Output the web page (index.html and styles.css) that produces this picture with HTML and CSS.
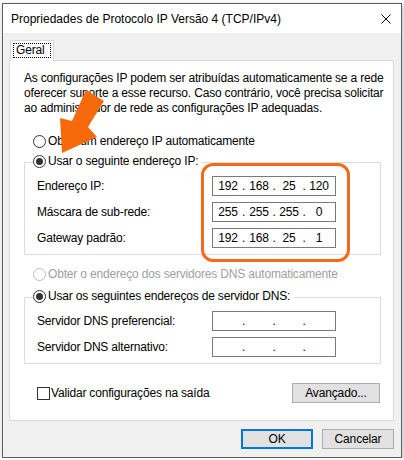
FILE: index.html
```html
<!DOCTYPE html>
<html lang="pt">
<head>
    <meta charset="UTF-8">
    <title>Propriedades de Protocolo IP Versão 4 (TCP/IPv4)</title>
    <link rel="stylesheet" href="styles.css">
</head>
<body>

    <div class="window">
        <div class="titlebar">
            <span class="title">Propriedades de Protocolo IP Versão 4 (TCP/IPv4)</span>
            <svg class="close" width="10" height="10" viewBox="0 0 10 10">
                <path d="M0.5 0.5 L9.5 9.5 M9.5 0.5 L0.5 9.5" stroke="#000" stroke-width="1"/>
            </svg>
        </div>

        <div class="content">
            <div class="tabs">
                <div class="tab"><span class="tab-focus">Geral</span></div>
            </div>

            <div class="panel">
                <p class="intro">
                    As configurações IP podem ser atribuídas automaticamente se a rede<br>
                    oferecer suporte a esse recurso. Caso contrário, você precisa solicitar<br>
                    ao administrador de rede as configurações IP adequadas.
                </p>

                <div class="option first">
                    <span class="radio"></span>
                    <span>Obter um endereço IP automaticamente</span>
                </div>

                <div class="group ip-group">
                    <div class="group-head">
                        <span class="radio checked"></span>
                        <span>Usar o seguinte endereço IP:</span>
                    </div>
                    <div class="rows">
                        <label>Endereço IP:</label>
                        <div class="ip-box">
                            <span>192</span><i>.</i><span>168</span><i>.</i><span>25</span><i>.</i><span>120</span>
                        </div>
                        <label>Máscara de sub-rede:</label>
                        <div class="ip-box">
                            <span>255</span><i>.</i><span>255</span><i>.</i><span>255</span><i>.</i><span>0</span>
                        </div>
                        <label>Gateway padrão:</label>
                        <div class="ip-box">
                            <span>192</span><i>.</i><span>168</span><i>.</i><span>25</span><i>.</i><span>1</span>
                        </div>
                    </div>
                    <div class="highlight"></div>
                </div>

                <div class="option disabled">
                    <span class="radio"></span>
                    <span>Obter o endereço dos servidores DNS automaticamente</span>
                </div>

                <div class="group dns-group">
                    <div class="group-head">
                        <span class="radio checked"></span>
                        <span>Usar os seguintes endereços de servidor DNS:</span>
                    </div>
                    <div class="rows">
                        <label>Servidor DNS preferencial:</label>
                        <div class="ip-box">
                            <span></span><i>.</i><span></span><i>.</i><span></span><i>.</i><span></span>
                        </div>
                        <label>Servidor DNS alternativo:</label>
                        <div class="ip-box">
                            <span></span><i>.</i><span></span><i>.</i><span></span><i>.</i><span></span>
                        </div>
                    </div>
                </div>

                <div class="panel-bottom">
                    <div class="check-line">
                        <span class="checkbox"></span>
                        <span>Validar configurações na saída</span>
                    </div>
                    <button class="btn advanced">Avançado...</button>
                </div>
            </div>

            <div class="footer">
                <button class="btn default">OK</button>
                <button class="btn">Cancelar</button>
            </div>
        </div>
    </div>

    <!-- seta laranja por cima do texto -->
    <svg class="arrow" width="404" height="460" viewBox="0 0 404 460">
        <polygon points="86,90 104,101 88,127 97,137 62,153 60,118 72,121" fill="#f76a0c"/>
    </svg>

</body>
</html>
```

FILE: styles.css
```css
body {
    margin: 0;
    background-color: #fff;
    font-family: 'Liberation Sans', Arial, sans-serif;
    font-size: 12px;
    letter-spacing: -0.18px;
    color: #000;
}

.window {
    box-sizing: border-box;
    width: 400px;
    margin: 3px 0 0 2px;
    border: 1px solid #5f5f5f;
    background-color: #f0f0f0;
    box-shadow: 1px 2px 5px rgba(0, 0, 0, 0.3);
}

.titlebar {
    height: 29px;
    background-color: #fff;
    display: flex;
    align-items: center;
    justify-content: space-between;
    padding: 0 10px 0 8px;
}

.title {
    font-size: 12px;
    letter-spacing: 0;
    color: #000;
}

.content {
    padding: 7px 8px 8px 6px;
}

.tabs {
    display: flex;
    height: 20px;
    position: relative;
    z-index: 1;
}

.tab {
    width: 44px;
    height: 21px;
    box-sizing: border-box;
    margin-left: 1px;
    background-color: #fff;
    border: 1px solid #d9d9d9;
    border-bottom: none;
    padding: 2px 0 0 2px;
}

.tab-focus {
    display: inline-block;
    width: 38px;
    height: 15px;
    line-height: 13px;
    box-sizing: border-box;
    border: 1px dotted #000;
    padding-left: 2px;
}

.panel {
    box-sizing: border-box;
    width: 385px;
    background-color: #fff;
    border: 1px solid #d9d9d9;
    padding: 10px 0 17px 14px;
}

.intro {
    margin: 0;
    line-height: 15px;
    white-space: nowrap;
}

.option,
.group-head,
.check-line {
    display: flex;
    align-items: center;
    height: 16px;
    line-height: 16px;
    white-space: nowrap;
}

.option {
    padding-left: 9px;
}

.option.first {
    margin-top: 17px;
}

.option.disabled {
    margin-top: 11px;
    color: #a0a0a0;
}

.radio {
    width: 13px;
    height: 13px;
    box-sizing: border-box;
    border: 1px solid #333;
    border-radius: 50%;
    background-color: #fff;
    margin-right: 2px;
    display: flex;
    align-items: center;
    justify-content: center;
}

.radio.checked::after {
    content: "";
    width: 7px;
    height: 7px;
    border-radius: 50%;
    background-color: #333;
}

.option.disabled .radio {
    border-color: #bcbcbc;
}

.group {
    position: relative;
    box-sizing: border-box;
    width: 357px;
    border: 1px solid #dcdcdc;
    padding: 0 0 6px 12px;
}

.ip-group {
    margin-top: 13px;
    padding-bottom: 6px;
}

.dns-group {
    margin-top: 15px;
}

.group-head {
    width: fit-content;
    margin: -10px 0 0 -4px;
    background-color: #fff;
    padding-right: 4px;
}

.rows {
    display: grid;
    grid-template-columns: 175px 124px;
    row-gap: 6px;
    margin-top: 7px;
    align-items: center;
}

.ip-box {
    box-sizing: border-box;
    height: 20px;
    border: 1px solid #7a7a7a;
    padding-left: 3px;
    display: grid;
    grid-template-columns: 24px 7px 24px 6px 24px 6px 24px;
    align-items: center;
    text-align: center;
    line-height: 18px;
}

.ip-box i {
    font-style: normal;
}

.highlight {
    position: absolute;
    left: 176px;
    top: 0;
    width: 149px;
    height: 99px;
    box-sizing: border-box;
    border: 3px solid #f26b1d;
    border-radius: 12px;
}

.panel-bottom {
    display: flex;
    align-items: center;
    justify-content: space-between;
    width: 356px;
    margin-top: 19px;
}

.check-line {
    padding-left: 13px;
}

.checkbox {
    width: 13px;
    height: 13px;
    box-sizing: border-box;
    border: 1px solid #333;
    background-color: #fff;
    margin-right: 1px;
}

.btn {
    font-family: inherit;
    font-size: 12px;
    letter-spacing: -0.15px;
    color: #000;
    height: 20px;
    width: 72px;
    padding: 0;
    background-color: #e1e1e1;
    border: 1px solid #adadad;
}

.btn.advanced {
    width: 88px;
}

.btn.default {
    border: 2px solid #0078d7;
}

.footer {
    display: flex;
    justify-content: flex-end;
    gap: 9px;
    width: 385px;
    margin-top: 8px;
}

.arrow {
    position: absolute;
    left: 0;
    top: 0;
    pointer-events: none;
}
```
